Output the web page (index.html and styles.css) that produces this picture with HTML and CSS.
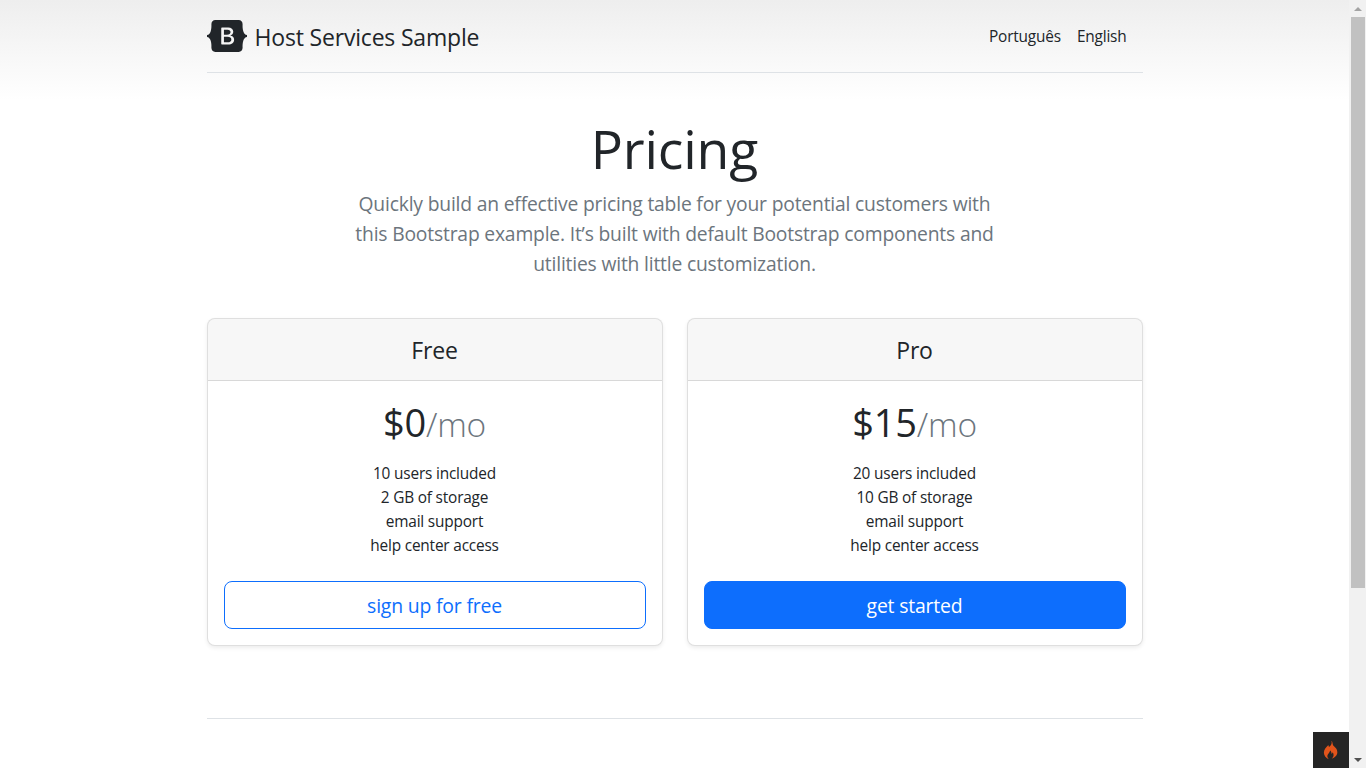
FILE: index.html
```html
<!DOCTYPE html>
<html lang="en">
<head>
    <meta charset="UTF-8">
    <meta name="viewport" content="width=device-width, initial-scale=1.0">
    <title>Host Services Sample</title>
    <link rel="stylesheet" href="styles.css">
</head>
<body>
    <div class="page">
        <div class="container">
            <header class="topbar">
                <a href="#" class="brand">
                    <svg class="brand_icon" viewBox="0 0 118 94" aria-hidden="true">
                        <path fill-rule="evenodd" clip-rule="evenodd" d="M24.509 0c-6.733 0-11.715 5.893-11.492 12.284.214 6.14-.064 14.092-2.066 20.577C8.943 39.365 5.547 43.485 0 44.014v5.972c5.547.529 8.943 4.649 10.951 11.153 2.002 6.485 2.28 14.437 2.066 20.577C12.794 88.106 17.776 94 24.51 94H93.5c6.733 0 11.714-5.893 11.491-12.284-.214-6.14.064-14.092 2.066-20.577 2.009-6.504 5.396-10.624 10.943-11.153v-5.972c-5.547-.529-8.934-4.649-10.943-11.153-2.002-6.484-2.28-14.437-2.066-20.577C105.214 5.894 100.233 0 93.5 0H24.508zM80 57.863C80 66.663 73.436 72 62.543 72H44a2 2 0 01-2-2V24a2 2 0 012-2h18.437c9.083 0 15.044 4.92 15.044 12.474 0 5.302-4.01 10.049-9.119 10.88v.277C75.317 46.394 80 51.21 80 57.863zM60.521 28.34H49.948v14.934h8.905c6.884 0 10.68-2.772 10.68-7.727 0-4.643-3.264-7.207-9.012-7.207zM49.948 49.2v16.458H60.91c7.167 0 10.964-2.876 10.964-8.281 0-5.406-3.903-8.178-11.425-8.178H49.948z" fill="#212529"/>
                    </svg>
                    <span class="brand_name">Host Services Sample</span>
                </a>
                <nav class="lang_nav">
                    <a href="#">Português</a>
                    <a href="#">English</a>
                </nav>
            </header>

            <div class="pricing_header">
                <h1>Pricing</h1>
                <p>Quickly build an effective pricing table for your potential customers with this Bootstrap example. It’s built with default Bootstrap components and utilities with little customization.</p>
            </div>

            <main class="plans">
                <section class="card">
                    <div class="card_header"><h4>Free</h4></div>
                    <div class="card_body">
                        <h2 class="price">$0<small>/mo</small></h2>
                        <ul>
                            <li>10 users included</li>
                            <li>2 GB of storage</li>
                            <li>email support</li>
                            <li>help center access</li>
                        </ul>
                        <a href="#" class="btn btn_outline">sign up for free</a>
                    </div>
                </section>
                <section class="card">
                    <div class="card_header"><h4>Pro</h4></div>
                    <div class="card_body">
                        <h2 class="price">$15<small>/mo</small></h2>
                        <ul>
                            <li>20 users included</li>
                            <li>10 GB of storage</li>
                            <li>email support</li>
                            <li>help center access</li>
                        </ul>
                        <a href="#" class="btn btn_primary">get started</a>
                    </div>
                </section>
            </main>

            <footer class="footer"></footer>
        </div>

        <a href="#" class="debug_badge" aria-label="debug toolbar">
            <svg viewBox="0 0 20 24" width="16" height="19" aria-hidden="true">
                <path fill="#e2541b" fill-rule="evenodd" d="M10.6 0c.9 3-.6 5-2.3 6.8C6.900 8.300 7 5.800 6.700 5.200 3.800 7.800 1 11 1 14.800c0 3.600 2.900 6.900 6.400 8.200-1.500-1.300-2.400-3-1.800-4.900.5-1.700 2.700-3.200 3.300-6 1.400 1.100 1.800 2.600 1.500 3.900 1-.2 1.500-.9 1.700-1.800 1 1.500 1.500 3.200.9 5-.4 1.300-1 2.200-2 3 3.500-.9 7-4 7-8 0-5.300-4.300-6.700-5.500-9.100-.6-1.800-.6-3.800-1.900-6.100z"/>
            </svg>
        </a>
    </div>

    <div class="scrollbar" aria-hidden="true">
        <span class="arrow arrow_up"></span>
        <div class="track"><div class="thumb"></div></div>
        <span class="arrow arrow_down"></span>
    </div>
</body>
</html>
```

FILE: styles.css
```css
* {
    margin: 0;
    padding: 0;
    box-sizing: border-box;
}

html, body {
    height: 100%;
    overflow: hidden;
}

body {
    display: flex;
    font-family: "Open Sans", "Noto Sans", sans-serif;
    font-size: 15.4px;
    letter-spacing: -0.012em;
    line-height: 24px;
    color: #212529;
    background: #fff;
}

a {
    text-decoration: none;
    color: inherit;
}

li {
    list-style: none;
}

.page {
    flex: 1;
    position: relative;
    overflow: hidden;
    background-image: linear-gradient(180deg, #eee, #fff 100px, #fff);
}

.container {
    width: 960px;
    margin: 0 auto;
    padding: 16px 12px;
}

/* top bar */
.topbar {
    display: flex;
    align-items: center;
    justify-content: space-between;
    height: 57px;
    padding-bottom: 16px;
    border-bottom: 1px solid #dee2e6;
    margin-bottom: 24px;
}

.brand {
    display: flex;
    align-items: center;
}

.brand_icon {
    width: 40px;
    height: 32px;
    margin-right: 8px;
}

.brand_name {
    font-size: 23px;
    padding-top: 2px;
}

.lang_nav {
    display: flex;
    gap: 16px;
    padding: 2px 16px 0 0;
}

/* heading */
.pricing_header {
    width: 720px;
    margin: 0 auto;
    padding: 18px 35px 39px;
    text-align: center;
}

.pricing_header h1 {
    font-size: 53.5px;
    font-weight: 400;
    line-height: 67px;
    margin-bottom: 7px;
}

.pricing_header p {
    font-size: 19.3px;
    line-height: 30px;
    color: #6c757d;
}

/* cards */
.plans {
    display: grid;
    grid-template-columns: 1fr 1fr;
    gap: 24px;
    text-align: center;
}

.card {
    background: #fff;
    border: 1px solid rgba(0, 0, 0, .125);
    border-radius: 8px;
    box-shadow: 0 2px 4px rgba(0, 0, 0, .075);
    overflow: hidden;
}

.card_header {
    padding: 17px 16px 15px;
    background: rgba(0, 0, 0, .03);
    border-bottom: 1px solid rgba(0, 0, 0, .125);
}

.card_header h4 {
    font-size: 23px;
    font-weight: 400;
    line-height: 29px;
}

.card_body {
    padding: 18px 16px 16px;
}

.price {
    font-size: 38px;
    font-weight: 500;
    line-height: 47px;
    margin-bottom: 14px;
}

.price small {
    font-size: 33.500px;
    font-weight: 300;
    color: #6c757d;
}

.card_body ul {
    margin-bottom: 23px;
}

.btn {
    display: block;
    height: 48px;
    line-height: 48px;
    font-size: 19.4px;
    border: 1px solid #0d6efd;
    border-radius: 8px;
}

.btn_outline {
    color: #0d6efd;
}

.btn_primary {
    color: #fff;
    background: #0d6efd;
}

.footer {
    margin-top: 72px;
    border-top: 1px solid #dee2e6;
}

/* floating badge */
.debug_badge {
    position: absolute;
    right: 0;
    bottom: 0;
    width: 36px;
    height: 36px;
    display: flex;
    align-items: center;
    justify-content: center;
    background: #252525;
}

/* fake scrollbar, the page is taller than the window */
.scrollbar {
    flex: 0 0 17px;
    display: flex;
    flex-direction: column;
    background: #f1f1f1;
}

.track {
    flex: 1;
}

.thumb {
    height: 571px;
    margin: 0 1px 0 2px;
    background: #c1c1c1;
}

.arrow {
    display: flex;
    height: 17px;
    align-items: center;
    justify-content: center;
}

.arrow::before {
    content: "";
    border-left: 4px solid transparent;
    border-right: 4px solid transparent;
}

.arrow_up::before {
    border-bottom: 4px solid #a3a3a3;
}

.arrow_down::before {
    border-top: 4px solid #505050;
}
```
